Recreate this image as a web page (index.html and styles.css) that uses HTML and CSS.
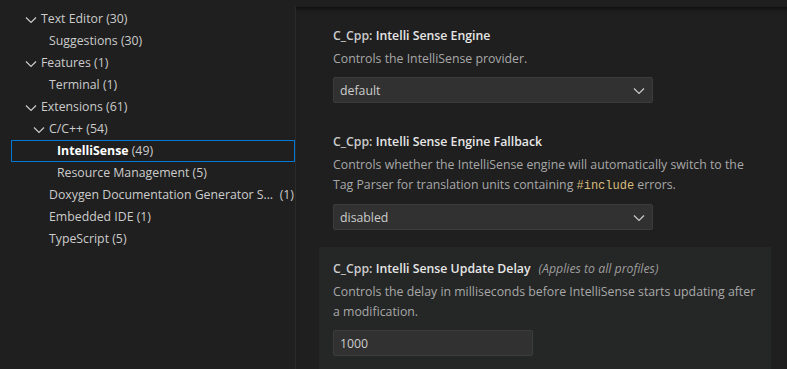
FILE: index.html
```html
<!DOCTYPE html>
<html lang="en">
<head>
    <meta charset="UTF-8">
    <title>Settings</title>
    <link rel="stylesheet" href="styles.css">
</head>
<body>
    <div class="editor">
        <nav class="toc">
            <div class="row l1"><span class="twistie"><svg viewBox="0 0 16 16"><path d="M3 6.5 L8 11.5 L13 6.5"/></svg></span><span class="label">Text Editor <span class="count">(30)</span></span></div>
            <div class="row l2"><span class="twistie"></span><span class="label">Suggestions <span class="count">(30)</span></span></div>
            <div class="row l1"><span class="twistie"><svg viewBox="0 0 16 16"><path d="M3 6.5 L8 11.5 L13 6.5"/></svg></span><span class="label">Features <span class="count">(1)</span></span></div>
            <div class="row l2"><span class="twistie"></span><span class="label">Terminal <span class="count">(1)</span></span></div>
            <div class="row l1"><span class="twistie"><svg viewBox="0 0 16 16"><path d="M3 6.5 L8 11.5 L13 6.5"/></svg></span><span class="label">Extensions <span class="count">(61)</span></span></div>
            <div class="row l2"><span class="twistie"><svg viewBox="0 0 16 16"><path d="M3 6.5 L8 11.5 L13 6.5"/></svg></span><span class="label">C/C++ <span class="count">(54)</span></span></div>
            <div class="row l3 focused"><span class="twistie"></span><span class="label"><b>IntelliSense</b> <span class="count">(49)</span></span></div>
            <div class="row l3"><span class="twistie"></span><span class="label">Resource Management <span class="count">(5)</span></span></div>
            <div class="row l2"><span class="twistie"></span><span class="label trunc">Doxygen Documentation Generator Settings</span><span class="count right">(1)</span></div>
            <div class="row l2"><span class="twistie"></span><span class="label">Embedded IDE <span class="count">(1)</span></span></div>
            <div class="row l2"><span class="twistie"></span><span class="label">TypeScript <span class="count">(5)</span></span></div>
        </nav>

        <main class="settings">
            <section class="setting">
                <div class="title"><span class="category">C_Cpp: </span><span class="name">Intelli Sense Engine</span></div>
                <div class="desc">Controls the IntelliSense provider.</div>
                <div class="select select-wide">
                    <span>default</span>
                    <svg viewBox="0 0 16 16"><path d="M3 6.5 L8 11.5 L13 6.5"/></svg>
                </div>
            </section>

            <section class="setting">
                <div class="title"><span class="category">C_Cpp: </span><span class="name">Intelli Sense Engine Fallback</span></div>
                <div class="desc">Controls whether the IntelliSense engine will automatically switch to the Tag Parser for translation units containing <code>#include</code> errors.</div>
                <div class="select select-wide">
                    <span>disabled</span>
                    <svg viewBox="0 0 16 16"><path d="M3 6.5 L8 11.5 L13 6.5"/></svg>
                </div>
            </section>

            <section class="setting hovered">
                <div class="title"><span class="category">C_Cpp: </span><span class="name">Intelli Sense Update Delay</span><span class="scope">(Applies to all profiles)</span></div>
                <div class="desc">Controls the delay in milliseconds before IntelliSense starts updating after a modification.</div>
                <div class="input">1000</div>
            </section>
        </main>
    </div>
</body>
</html>
```

FILE: styles.css
```css
body {
    margin: 0;
    background-color: #1f1f1f;
    color: #cccccc;
    font-family: 'Open Sans', 'Noto Sans', Arial, sans-serif;
    font-size: 12.3px;
    height: 369px;
    overflow: hidden;
}

.editor {
    display: flex;
    padding-top: 7px;
    height: 362px;
}

/* tree on the left */
.toc {
    width: 295px;
    flex: none;
    padding-top: 1px;
}

.row {
    display: flex;
    align-items: center;
    height: 22px;
    line-height: 22px;
    white-space: nowrap;
    box-sizing: border-box;
    padding-right: 1px;
}

.row.l1 { padding-left: 23px; }
.row.l2 { padding-left: 31px; }
.row.l3 { padding-left: 39px; }

.twistie {
    width: 16px;
    height: 16px;
    margin-right: 2px;
    flex: none;
}

.twistie svg, .select svg {
    width: 16px;
    height: 16px;
    display: block;
    fill: none;
    stroke: #cccccc;
    stroke-width: 1.2;
}

.label b {
    color: #ffffff;
    font-weight: 700;
}

.trunc {
    overflow: hidden;
    text-overflow: ellipsis;
    flex: 1;
    min-width: 0;
}

.count.right {
    margin-left: 6px;
}

.row.focused {
    margin-left: 11px;
    padding-left: 28px;
    outline: 1px solid #0078d4;
    outline-offset: -1px;
}

/* settings list on the right */
.settings {
    flex: 1;
    border-left: 1px solid #2b2b2b;
    box-shadow: inset 0 6px 6px -6px #000000;
    padding: 7px 16px 0 23px;
}

.setting {
    padding: 12px 14px 17px;
}

.setting.hovered {
    background-color: #252626;
}

.title {
    line-height: 20px;
    font-weight: 600;
    color: #cccccc;
}

.title .name {
    color: #e7e7e7;
}

.title .scope {
    font-weight: 400;
    font-style: italic;
    color: #9d9d9d;
    margin-left: 8px;
}

.desc {
    margin-top: 3px;
    line-height: 20px;
    color: #a8a8a8;
}

code {
    font-family: 'Liberation Mono', 'DejaVu Sans Mono', monospace;
    font-size: 12px;
    color: #d7ba7d;
}

.select, .input {
    margin-top: 8px;
    height: 26px;
    box-sizing: border-box;
    background-color: #313131;
    border: 1px solid #3c3c3c;
    border-radius: 2px;
    color: #cccccc;
    display: flex;
    align-items: center;
    padding: 0 6px;
}

.select-wide {
    width: 320px;
    justify-content: space-between;
    padding-right: 5px;
}

.input {
    width: 200px;
}
```
